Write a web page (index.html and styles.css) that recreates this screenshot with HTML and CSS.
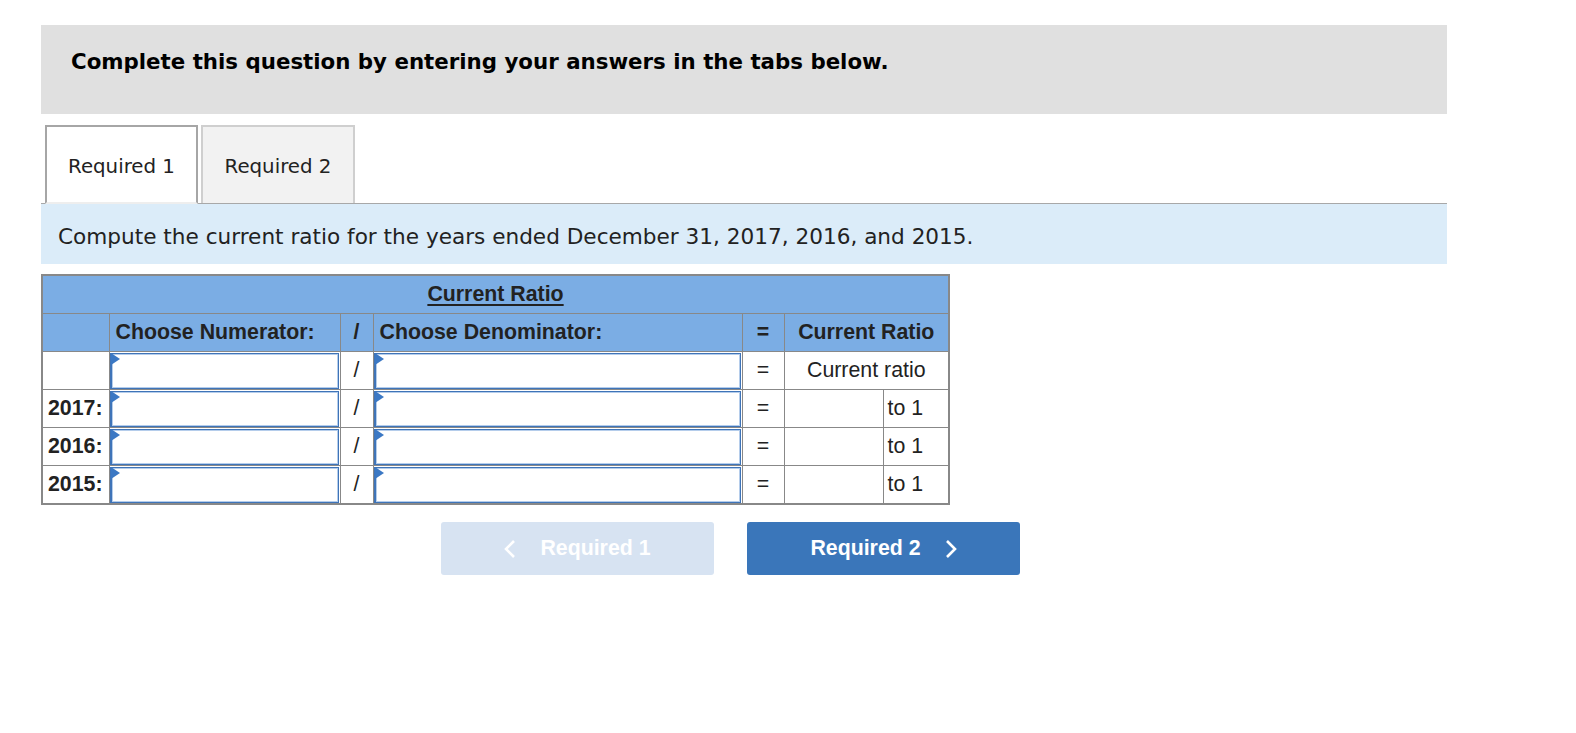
FILE: index.html
```html
<!DOCTYPE html>
<html lang="en">
<head>
<meta charset="utf-8">
<title>Current Ratio</title>
<link rel="stylesheet" href="styles.css">
</head>
<body>
<div class="page">
  <div class="prompt">Complete this question by entering your answers in the tabs below.</div>

  <div class="tabs">
    <div class="tab tab-active">Required 1</div>
    <div class="tab">Required 2</div>
  </div>

  <div class="instruction">Compute the current ratio for the years ended December 31, 2017, 2016, and 2015.</div>

  <table class="ratio">
    <colgroup>
      <col class="c-year"><col class="c-num"><col class="c-op"><col class="c-den"><col class="c-eq"><col class="c-val"><col class="c-unit">
    </colgroup>
    <tr class="head">
      <th colspan="7" class="title"><span>Current Ratio</span></th>
    </tr>
    <tr class="head">
      <th></th>
      <th class="left">Choose Numerator:</th>
      <th>/</th>
      <th class="left">Choose Denominator:</th>
      <th>=</th>
      <th colspan="2">Current Ratio</th>
    </tr>
    <tr>
      <td class="year"></td>
      <td class="field"><div class="input"><span class="flag"></span></div></td>
      <td class="op">/</td>
      <td class="field"><div class="input"><span class="flag"></span></div></td>
      <td class="op">=</td>
      <td colspan="2" class="label">Current ratio</td>
    </tr>
    <tr>
      <td class="year">2017:</td>
      <td class="field"><div class="input"><span class="flag"></span></div></td>
      <td class="op">/</td>
      <td class="field"><div class="input"><span class="flag"></span></div></td>
      <td class="op">=</td>
      <td class="value"></td>
      <td class="unit">to 1</td>
    </tr>
    <tr>
      <td class="year">2016:</td>
      <td class="field"><div class="input"><span class="flag"></span></div></td>
      <td class="op">/</td>
      <td class="field"><div class="input"><span class="flag"></span></div></td>
      <td class="op">=</td>
      <td class="value"></td>
      <td class="unit">to 1</td>
    </tr>
    <tr>
      <td class="year">2015:</td>
      <td class="field"><div class="input"><span class="flag"></span></div></td>
      <td class="op">/</td>
      <td class="field"><div class="input"><span class="flag"></span></div></td>
      <td class="op">=</td>
      <td class="value"></td>
      <td class="unit">to 1</td>
    </tr>
  </table>

  <div class="nav">
    <div class="btn btn-prev">
      <svg class="chev" width="12" height="20" viewBox="0 0 12 20"><polyline points="10,2 2,10 10,18" fill="none" stroke="#fff" stroke-width="2.6"/></svg>
      <span>Required 1</span>
    </div>
    <div class="btn btn-next">
      <span>Required 2</span>
      <svg class="chev" width="12" height="20" viewBox="0 0 12 20"><polyline points="2,2 10,10 2,18" fill="none" stroke="#fff" stroke-width="2.6"/></svg>
    </div>
  </div>
</div>
</body>
</html>
```

FILE: styles.css
```css
html, body {
  margin: 0;
  padding: 0;
  background: #fff;
}

.page {
  padding: 25px 0 0 41px;
  width: 1406px;
  font-family: "DejaVu Sans", Verdana, sans-serif;
  color: #222;
}

.prompt {
  background: #e0e0e0;
  height: 89px;
  box-sizing: border-box;
  padding: 23px 0 0 30px;
  font-weight: bold;
  font-size: 21.33px;
  line-height: 28px;
  color: #000;
}

.tabs {
  display: flex;
  gap: 3px;
  margin-top: 11px;
  padding-left: 4px;
  height: 78px;
  position: relative;
  z-index: 1;
}

.tab {
  box-sizing: border-box;
  width: 154px;
  height: 78px;
  display: flex;
  align-items: center;
  justify-content: center;
  padding-top: 3px;
  font-size: 19.8px;
  background: #f2f2f2;
  border: 2px solid #cfcfcf;
  border-bottom: none;
  color: #222;
}

.tab-active {
  width: 153px;
  background: #fff;
  border-color: #a6a6a6;
  height: 79px;
  margin-bottom: -1px;
  border-bottom: 2px solid #eeeeee;
}

.instruction {
  height: 61px;
  box-sizing: border-box;
  border-top: 1px solid #a8a8a8;
  background: #dbecf9;
  padding: 19px 0 0 17px;
  font-size: 21.6px;
  line-height: 28px;
  color: #222;
}

.ratio {
  margin-top: 10px;
  border-collapse: collapse;
  table-layout: fixed;
  width: 907px;
  font-family: "Liberation Sans", Arial, sans-serif;
  font-size: 21.33px;
  color: #222;
  border: 2px solid #888;
}

.c-year { width: 67px; }
.c-num { width: 231px; }
.c-op { width: 33px; }
.c-den { width: 369px; }
.c-eq { width: 42px; }
.c-val { width: 99px; }
.c-unit { width: 66px; }

.ratio th,
.ratio td {
  border: 1px solid #888;
  height: 37px;
  padding: 0;
  text-align: center;
  vertical-align: middle;
}

.ratio tr.head th {
  background: #7badE4;
  font-weight: bold;
  color: #222;
}

.ratio th.title span {
  text-decoration: underline;
  text-underline-offset: 3px;
}

.ratio th.left {
  text-align: left;
  padding-left: 6px;
}

.ratio td.year {
  text-align: left;
  font-weight: bold;
  padding-left: 5px;
}

.ratio td.field {
  padding: 0 1px 0 0;
}

.input {
  position: relative;
  box-sizing: border-box;
  height: 36px;
  background: #fff;
  border: 1px solid #3f74b8;
  border-left-width: 2px;
  box-shadow: inset 0 0 0 1px #b5cdeb;
}

.flag {
  position: absolute;
  left: -1px;
  top: -1px;
  width: 0;
  height: 0;
  border-top: 6px solid transparent;
  border-bottom: 6px solid transparent;
  border-left: 9px solid #3b78c4;
}

.ratio td.unit {
  text-align: left;
  padding-left: 4px;
}

.nav {
  display: flex;
  gap: 33px;
  margin-top: 17px;
  padding-left: 400px;
}

.btn {
  width: 273px;
  height: 53px;
  border-radius: 3px;
  display: flex;
  align-items: center;
  justify-content: center;
  gap: 24px;
  font-family: "Liberation Sans", Arial, sans-serif;
  font-weight: bold;
  font-size: 21.33px;
  color: #fff;
}

.btn-prev {
  background: #d7e3f2;
}

.btn-next {
  background: #3a76ba;
}

.chev {
  display: block;
}
```
